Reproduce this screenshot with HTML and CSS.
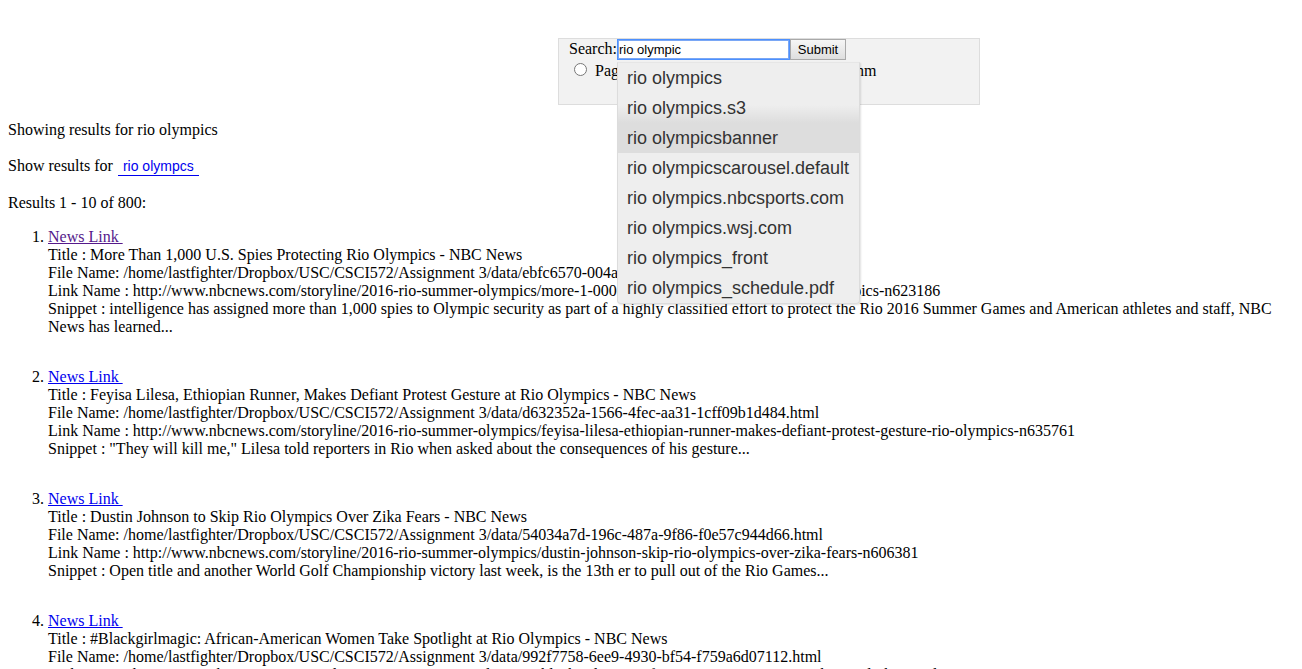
FILE: index.html
```html
<!DOCTYPE html>
<html>
<head>
<meta charset="utf-8">
<link rel="stylesheet" href="styles.css">
</head>
<body>
<div class="search-box">
  <form class="search-form">
    <div class="row">
      <label class="lbl">Search:</label><span class="field-wrap"><input class="query" type="text" value="rio olympic"><ul class="suggest">
          <li>rio olympics</li>
          <li class="pre">rio olympics.s3</li>
          <li class="hover">rio olympicsbanner</li>
          <li>rio olympicscarousel.default</li>
          <li>rio olympics.nbcsports.com</li>
          <li>rio olympics.wsj.com</li>
          <li>rio olympics_front</li>
          <li>rio olympics_schedule.pdf</li>
        </ul></span><button class="submit" type="button">Submit</button>
    </div>
    <div class="row radios">
      <input type="radio" name="algo" class="radio"><span>Page Rank Algorithm</span>
      <input type="radio" name="algo" class="radio"><span>Lucene Algorithm</span>
    </div>
  </form>
</div>

<p class="para first">Showing results for rio olympics</p>
<p class="para">Show results for <a class="suggest-link" href="#">rio olympcs</a></p>
<p class="para last">Results 1 - 10 of 800:</p>

<ol class="results">
  <li>
    <a class="visited" href="#">News Link&nbsp;</a><br>
    Title : More Than 1,000 U.S. Spies Protecting Rio Olympics - NBC News<br>
    File Name: /home/lastfighter/Dropbox/USC/CSCI572/Assignment 3/data/ebfc6570-004a-4c1e-9d2b.html<br>
    Link Name : http://www.nbcnews.com/storyline/2016-rio-summer-olympics/more-1-000-u-s-spies-protecting--2016-rio-olympics-n623186<br>
    Snippet : intelligence has assigned more than 1,000 spies to Olympic security as part of a highly classified effort to protect the Rio 2016 Summer Games and American athletes and staff, NBC News has learned...
  </li>
  <li>
    <a href="#">News Link&nbsp;</a><br>
    Title : Feyisa Lilesa, Ethiopian Runner, Makes Defiant Protest Gesture at Rio Olympics - NBC News<br>
    File Name: /home/lastfighter/Dropbox/USC/CSCI572/Assignment 3/data/d632352a-1566-4fec-aa31-1cff09b1d484.html<br>
    Link Name : http://www.nbcnews.com/storyline/2016-rio-summer-olympics/feyisa-lilesa-ethiopian-runner-makes-defiant-protest-gesture-rio-olympics-n635761<br>
    Snippet : "They will kill me," Lilesa told reporters in Rio when asked about the consequences of his gesture...
  </li>
  <li>
    <a href="#">News Link&nbsp;</a><br>
    Title : Dustin Johnson to Skip Rio Olympics Over Zika Fears - NBC News<br>
    File Name: /home/lastfighter/Dropbox/USC/CSCI572/Assignment 3/data/54034a7d-196c-487a-9f86-f0e57c944d66.html<br>
    Link Name : http://www.nbcnews.com/storyline/2016-rio-summer-olympics/dustin-johnson-skip-rio-olympics-over-zika-fears-n606381<br>
    Snippet : Open title and another World Golf Championship victory last week, is the 13th er to pull out of the Rio Games...
  </li>
  <li>
    <a href="#">News Link&nbsp;</a><br>
    Title : #Blackgirlmagic: African-American Women Take Spotlight at Rio Olympics - NBC News<br>
    File Name: /home/lastfighter/Dropbox/USC/CSCI572/Assignment 3/data/992f7758-6ee9-4930-bf54-f759a6d07112.html<br>
    Link Name : http://www.nbcnews.com/storyline/2016-rio-summer-olympics/blackgirlmagic-african-american-women-take-spotlight-rio-olympics-n628556<br>
    Snippet : At the Rio Olympics, black women athletes are taking the spotlight and making history...
  </li>
</ol>
</body>
</html>
```
FILE: styles.css
```css
html, body {
  margin: 0;
  padding: 0;
}
body {
  margin: 8px;
  font-family: "Liberation Serif", "Times New Roman", serif;
  font-size: 16px;
  line-height: 18px;
  color: #000;
  background: #fff;
}
.search-box {
  width: 420px;
  margin: 30px 0 0 550px;
  background: #f2f2f2;
  border: 1px solid #dddddd;
  height: 65px;
}
.search-form {
  margin: 0;
  padding: 0 0 0 10px;
}
.row {
  display: flex;
  align-items: center;
}
.lbl {
  line-height: 20px;
  height: 21px;
  display: inline-block;
}
.field-wrap {
  position: relative;
  display: inline-block;
}
.query {
  box-sizing: border-box;
  width: 173px;
  height: 21px;
  margin: 0;
  padding: 0 1px;
  border: 1px solid #4d90fe;
  outline: 1px solid #7aa7f5;
  outline-offset: -2px;
  font-family: "Liberation Sans", Arial, sans-serif;
  font-size: 13px;
  color: #000;
  background: #fff;
  display: block;
}
.submit {
  box-sizing: border-box;
  height: 21px;
  width: 56px;
  margin: 0;
  padding: 0;
  border: 1px solid #a9a9a9;
  border-radius: 0;
  background: linear-gradient(#f6f6f6, #dedede);
  font-family: "Liberation Sans", Arial, sans-serif;
  font-size: 13px;
  color: #000;
}
.radios {
  height: 22px;
  padding-left: 5px;
}
.radio {
  margin: 0 8px 3px 0;
  width: 13px;
  height: 13px;
}
.radios span {
  margin-right: 5px;
}
.suggest {
  position: absolute;
  left: 0;
  top: 23px;
  width: 243px;
  box-sizing: border-box;
  margin: 0;
  padding: 0;
  list-style: none;
  background: #eeeeee;
  border: 1px solid #dcdcdc;
  border-top-color: #e6e6e6;
  border-radius: 0 0 4px 4px;
  box-shadow: 1px 1px 2px rgba(0,0,0,0.12);
  z-index: 10;
}
.suggest li {
  height: 30px;
  line-height: 30px;
  padding-left: 9px;
  font-family: "Liberation Sans", Arial, sans-serif;
  font-size: 18px;
  color: #333333;
  white-space: nowrap;
}
.suggest li.pre {
  background: linear-gradient(#eeeeee 40%, #dddddd 100%);
}
.suggest li.hover {
  background: #dddddd;
}
.para {
  margin: 0 0 18px;
}
.para.first {
  margin-top: 16px;
}
.para.last {
  margin-bottom: 16px;
}
.suggest-link {
  display: inline-block;
  padding: 0 5px;
  line-height: 18px;
  border-bottom: 1px solid #0000ee;
  color: #0000ee;
  text-decoration: none;
  font-family: "Liberation Sans", Arial, sans-serif;
  font-size: 14px;
  margin-left: 1px;
}
.results {
  margin: 16px 0 0 0;
  padding-left: 40px;
}
.results li {
  margin-bottom: 32px;
}
.results a {
  color: #0000ee;
}
.results a.visited {
  color: #551a8b;
}
```
